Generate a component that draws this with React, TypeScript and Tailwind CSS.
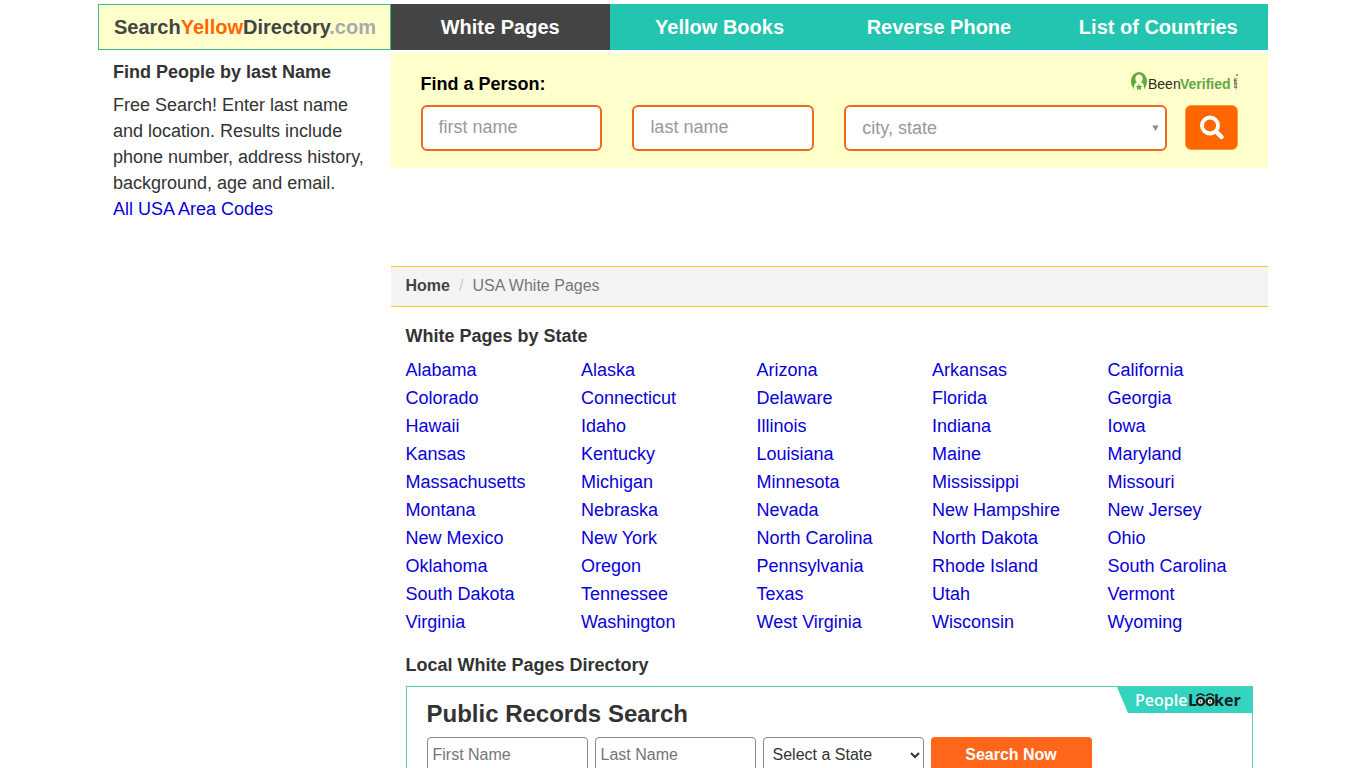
import React from 'react';

const navItems = ['White Pages', 'Yellow Books', 'Reverse Phone', 'List of Countries'];

const states = [
    'Alabama', 'Alaska', 'Arizona', 'Arkansas', 'California',
    'Colorado', 'Connecticut', 'Delaware', 'Florida', 'Georgia',
    'Hawaii', 'Idaho', 'Illinois', 'Indiana', 'Iowa',
    'Kansas', 'Kentucky', 'Louisiana', 'Maine', 'Maryland',
    'Massachusetts', 'Michigan', 'Minnesota', 'Mississippi', 'Missouri',
    'Montana', 'Nebraska', 'Nevada', 'New Hampshire', 'New Jersey',
    'New Mexico', 'New York', 'North Carolina', 'North Dakota', 'Ohio',
    'Oklahoma', 'Oregon', 'Pennsylvania', 'Rhode Island', 'South Carolina',
    'South Dakota', 'Tennessee', 'Texas', 'Utah', 'Vermont',
    'Virginia', 'Washington', 'West Virginia', 'Wisconsin', 'Wyoming',
];

function Header() {
    return (
        <header className="flex h-[46px] text-xl font-bold">
            <a href="#" className="flex w-1/4 items-center border border-[#3fb98f] bg-[#ffffcc] pl-[15px] whitespace-nowrap text-[#444]">
                <span>Search<span className="text-[#ff6600]">Yellow</span>Directory<span className="text-[#aaa]">.com</span></span>
            </a>
            <nav className="grid w-3/4 grid-cols-4">
                {navItems.map((item, i) => (
                    <a key={item} href="#" className={`flex items-center justify-center text-white ${i === 0 ? 'bg-[#444]' : 'bg-[#23c4b0]'}`}>{item}</a>
                ))}
            </nav>
        </header>
    );
}

function BeenVerifiedLogo() {
    return (
        <svg width="108" height="22" viewBox="0 0 108 22" role="img" aria-label="BeenVerified.com">
            <ellipse cx="9" cy="10.500" rx="8" ry="9.500" fill="#62a744" />
            <path d="M9 3.500C6.800 3.500 5.300 5.200 5.300 7.500C5.300 9.200 6 10.500 7 11.200C5 12 4 13.500 4 15.500V21H14V15.500C14 13.500 13 12 11 11.200C12 10.500 12.700 9.200 12.700 7.500C12.700 5.200 11.200 3.500 9 3.500Z" fill="#ffffcc" />
            <path d="M9 12.700l1 2.300 2.500.2-1.900 1.600.6 2.500L9 18l-2.200 1.300.6-2.500-1.900-1.600L8 15z" fill="#62a744" />
            <text x="18" y="18" fontFamily="'Liberation Sans', sans-serif" fontSize="14" fill="#2b2b22">Been</text>
            <text x="50" y="18" fontFamily="'Liberation Sans', sans-serif" fontSize="14" fontWeight="700" fill="#62a744">Verified</text>
            <text transform="translate(107 19) rotate(-90)" fontFamily="'Liberation Sans', sans-serif" fontSize="5" fontWeight="700" fill="#2b2b22">.com</text>
            <circle cx="107" cy="4" r="0.800" fill="#2b2b22" />
        </svg>
    );
}

function PeopleLookerLogo() {
    return (
        <svg width="136" height="26" viewBox="0 0 136 26" role="img" aria-label="PeopleLooker">
            <path d="M1 0H136V26H12Z" fill="#34d3bf" />
            <text x="19" y="19" fontFamily="'Open Sans', sans-serif" fontSize="16" fontWeight="600" fill="#fff">People</text>
            <text x="72" y="19" fontFamily="'Open Sans', sans-serif" fontSize="16" fontWeight="700" fill="#11201f">L</text>
            <text x="98" y="19" fontFamily="'Open Sans', sans-serif" fontSize="16" fontWeight="700" fill="#11201f">ker</text>
            <g stroke="#11201f" fill="none">
                <circle cx="84.500" cy="14.500" r="3.500" fill="#fff" strokeWidth="2.400" />
                <circle cx="94" cy="14.500" r="3.500" fill="#fff" strokeWidth="2.400" />
                <path d="M80.500 9Q84.500 5 88.500 9M90 9Q94 5 98 9" strokeWidth="1.500" />
            </g>
            <circle cx="84.500" cy="14.500" r="0.900" fill="#11201f" />
            <circle cx="94" cy="14.500" r="0.900" fill="#11201f" />
        </svg>
    );
}

function PersonSearch() {
    const field = 'h-[46px] w-full rounded-md border-2 border-[#ee6a1f] bg-white px-4 text-lg';
    return (
        <form className="bg-[#ffffcc] px-[30px] pt-[18px] pb-[17px]">
            <div className="flex h-[34px] items-start justify-between">
                <h2 className="text-lg leading-[26px] font-bold text-black">Find a Person:</h2>
                <BeenVerifiedLogo />
            </div>
            <div className="grid grid-cols-12 gap-x-[30px]">
                <input type="text" aria-label="first name" placeholder="first name" className={`${field} col-span-3 pb-0.5 placeholder:text-[#999]`} />
                <input type="text" aria-label="last name" placeholder="last name" className={`${field} col-span-3 pb-0.5 placeholder:text-[#999]`} />
                <div className="relative col-span-5">
                    <select aria-label="city, state" className={`${field} appearance-none text-[#999]`}>
                        <option>city, state</option>
                    </select>
                    <svg className="pointer-events-none absolute top-5 right-2" width="7" height="6" viewBox="0 0 7 6">
                        <path d="M0.500 0.500H6.500L3.500 6Z" fill="#888" />
                    </svg>
                </div>
                <div className="flex justify-end">
                    <button type="submit" aria-label="Search" className="flex h-[45px] w-[53px] shrink-0 items-center justify-center rounded-md border border-[#ff9a2e] bg-[#ff6600]">
                        <svg width="26" height="26" viewBox="0 0 26 26" fill="none" stroke="#fff">
                            <circle cx="11" cy="10.500" r="8" strokeWidth="3.800" />
                            <path d="M17 16.500L22.500 22" strokeWidth="4.500" strokeLinecap="round" />
                        </svg>
                    </button>
                </div>
            </div>
        </form>
    );
}

function Breadcrumb() {
    return (
        <nav aria-label="Breadcrumb" className="mt-[98px] flex h-[41px] items-center gap-[9px] border-y border-[#fbc62f] bg-[#f4f4f4] px-[15px] pb-0.5 text-base">
            <a href="#" className="font-bold text-[#444]">Home</a>
            <span className="text-[#ccc]">/</span>
            <span className="text-[#777]">USA White Pages</span>
        </nav>
    );
}

function PublicRecords() {
    const field = 'h-9 w-[161px] rounded border border-[#8a8a8a] bg-white px-[5px] text-base';
    return (
        <form className="relative mx-[15px] border border-[#58cdb8] px-5 pt-3 pb-5">
            <div className="absolute top-0 right-0"><PeopleLookerLogo /></div>
            <h3 className="mb-2 text-2xl leading-[30px] font-bold">Public Records Search</h3>
            <div className="flex gap-[7px]">
                <input type="text" aria-label="First Name" placeholder="First Name" className={`${field} placeholder:text-[#757575]`} />
                <input type="text" aria-label="Last Name" placeholder="Last Name" className={`${field} placeholder:text-[#757575]`} />
                <select aria-label="State" className={`${field} pb-0.5 text-[#333]`}>
                    <option>Select a State</option>
                    {states.map(s => <option key={s}>{s}</option>)}
                </select>
                <button type="submit" className="h-9 w-[161px] rounded bg-[#ff6619] text-base font-bold text-white">Search Now</button>
            </div>
        </form>
    );
}

export default function App() {
    return (
        <div className="h-screen overflow-hidden bg-white font-['Liberation_Sans',Arial,sans-serif] text-[#333]">
            <div className="mx-auto max-w-[1170px] pt-1">
                <Header />
                <div className="flex">
                    <aside className="w-1/4 px-[15px] pt-[9px] text-lg">
                        <h1 className="leading-[26px] font-bold">Find People by last Name</h1>
                        <p className="mt-[7px] leading-[26px]">
                            Free Search! Enter last name and location. Results include phone number, address history, background, age and email.<br />
                            <a href="#" className="text-[#0a00d8]">All USA Area Codes</a>
                        </p>
                    </aside>
                    <main className="w-3/4 pt-[3px]">
                        <PersonSearch />
                        <Breadcrumb />
                        <h2 className="mt-4 mb-[7px] px-[15px] text-lg leading-[26px] font-bold">White Pages by State</h2>
                        <ul className="grid grid-cols-5 text-lg leading-7">
                            {states.map(s => (
                                <li key={s} className="pl-[15px]"><a href="#" className="text-[#0a00d8]">{s}</a></li>
                            ))}
                        </ul>
                        <h2 className="mt-4 mb-2 px-[15px] text-lg leading-[26px] font-bold">Local White Pages Directory</h2>
                        <PublicRecords />
                    </main>
                </div>
            </div>
        </div>
    );
}
